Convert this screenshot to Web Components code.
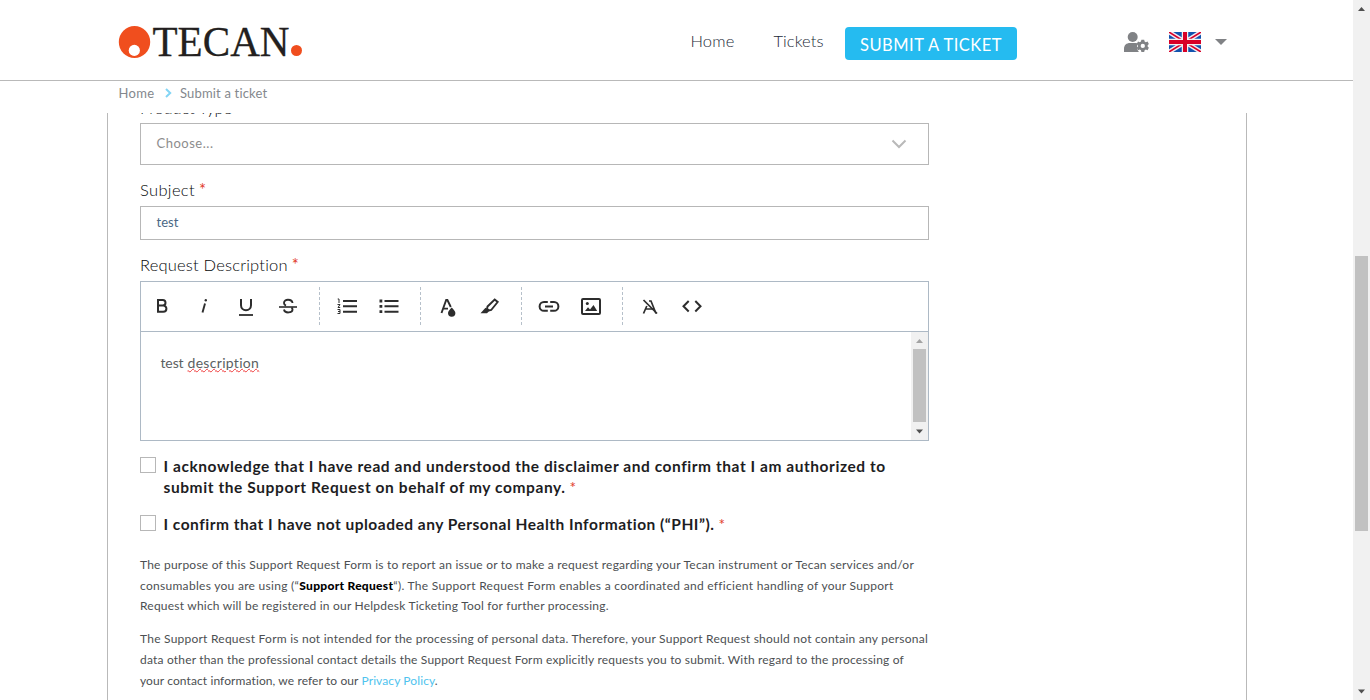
<!DOCTYPE html>
<html lang="en"><head><meta charset="utf-8"><title>Submit a ticket</title>
<style>
html,body{margin:0;height:100%;overflow:hidden;background:#fff}
body{font-family:Lato,"Open Sans",sans-serif;color:#4b5056}
</style></head><body>
<support-page></support-page>
<script>
const define=(name,html,setup)=>customElements.define(name,class extends HTMLElement{
  connectedCallback(){
    if(this.shadowRoot)return;
    this.attachShadow({mode:'open'}).innerHTML=html;
    if(setup)setup(this,this.shadowRoot);
  }
});

define('support-page',`<style>
:host{display:flex;width:100%;height:700px;overflow:hidden}
main{flex:1;min-width:0;display:flex;flex-direction:column}
.clip{flex:1;min-height:0;overflow:hidden;padding-left:107px}
scroll-bar{height:700px}
</style><main><site-header></site-header><bread-crumbs></bread-crumbs><div class="clip"><ticket-form></ticket-form></div></main>
<scroll-bar style="--before:239px;--thumb:275px;--up:#505050"></scroll-bar>`);

define('site-header',`<style>
:host{display:flex;box-sizing:border-box;height:81px;border-bottom:1px solid #b9b9b9;padding-left:119px;flex:none}
.logo{margin-top:24px;width:185px;height:38px;display:block}
nav{display:flex;margin-left:386.500px;color:#1c2a38;font-weight:300;font-size:16.500px;line-height:20px}
nav>span{margin-top:31px}
.t{margin-left:39px}
.btn{box-sizing:border-box;margin:27px 0 0 21px;width:172px;height:33px;border-radius:4px;background:#25bbf0;color:#fff;padding-left:15.500px;line-height:36px;font-size:16.500px;font-weight:400}
.user{margin:30px 0 0 106px;width:28px;height:24px}
.flag{margin:32px 0 0 18px;width:32px;height:20px}
.caret{margin:39px 0 0 14px;width:12px;height:6px}
svg{flex:none;display:block;overflow:visible}
.flag{overflow:hidden}
</style>
<svg class="logo" viewBox="119 24 185 38"><ellipse cx="134.500" cy="42" rx="15.700" ry="16" fill="#f04e1e"/><circle cx="134.300" cy="50.400" r="5.600" fill="#fff"/><text x="152.500" y="56" font-family="Liberation Serif,serif" font-size="42.500" textLength="137" lengthAdjust="spacingAndGlyphs" fill="#231f20" stroke="#231f20" stroke-width=".3">TECAN</text><circle cx="296.500" cy="50.500" r="5.500" fill="#f04e1e"/></svg>
<nav><span><fit-text w="44">Home</fit-text></span><span class="t"><fit-text w="50">Tickets</fit-text></span><div class="btn"><fit-text w="142">SUBMIT A TICKET</fit-text></div></nav>
<svg class="user" viewBox="0 0 28 24" fill="#808285"><circle cx="9.700" cy="7" r="5"/><path d="M1 22v-3c0-4 2.500-6 6-6h5c1.500 0 2.500.4 3 .9-1.500 1.800-1.300 5.500 1 8.100z"/><path d="M18.700 10.300h3l.5 1.900 1.300.7 1.900-.6 1.400 2.500-1.300 1.400v1.500l1.300 1.400-1.400 2.500-1.900-.6-1.300.8-.5 1.900h-3l-.5-1.900-1.300-.8-1.900.6-1.400-2.500 1.400-1.400v-1.500l-1.400-1.400 1.400-2.500 1.900.6 1.300-.7zM20.200 14.600a2.300 2.300 0 1 0 0 4.700 2.300 2.300 0 0 0 0-4.700z" fill-rule="evenodd" transform="translate(1.200 .3) scale(.92)"/></svg>
<svg class="flag" viewBox="0 0 32 20"><path fill="#1253ae" d="M0 0h32v20H0z"/><path d="M0 0l32 20M32 0L0 20" stroke="#f2e9ef" stroke-width="4.500"/><path d="M0 0l16 10M32 0L16 10M16 10L0 20M16 10l16 10" stroke="#d80027" stroke-width="1.500"/><path d="M16 0v20M0 10h32" stroke="#f2f0f2" stroke-width="6.500"/><path d="M16 0v20M0 10h32" stroke="#d80027" stroke-width="4"/></svg>
<svg class="caret" viewBox="0 0 12 6"><path fill="#808285" d="M0 0h12L6 6z"/></svg>`);

define('bread-crumbs',`<style>
:host{display:flex;height:32px;flex:none;padding-left:118.500px;font-size:13px;line-height:24px;color:#84888d}
svg{margin:7px 7.500px 0 9px;width:9px;height:10px}
</style><fit-text w="36">Home</fit-text><svg viewBox="0 0 9 10" fill="none" stroke="#83d5f5" stroke-width="2"><path d="M2 1l4.200 4L2 9"/></svg><fit-text w="87.500">Submit a ticket</fit-text>`);

define('field-label',`<style>
:host{display:flex;height:20px;line-height:20px;font-size:16.500px;font-weight:300;color:#050709}
i{font-style:normal;font-weight:400;color:#e2412e;margin-left:4px}
</style><slot></slot><i>*</i>`);

define('check-row',`<style>
:host{display:flex;font-size:15.500px;font-weight:700;line-height:21px;color:#1d1d1f}
.b{flex:none;box-sizing:border-box;width:16px;height:16px;border:1px solid #b7b7b7;margin:1px 7.500px 0 0}
</style><div class="b"></div><div><slot></slot></div>`);

define('ticket-form',`<style>
:host{display:block;box-sizing:border-box;width:1140px;height:700px;border:solid #b9b9b9;border-width:0 1px;padding-left:32px}
.col{width:789px;display:flow-root}
.type{margin-top:-15px;height:25px}
.box{box-sizing:border-box;border:1px solid #b7b7b7;padding-left:15.500px;font-size:13px;display:flex}
.select{height:42px;line-height:39px;color:#8d8d8d}
.select svg{margin:15px 0 0 auto;width:16px;height:10px;margin-right:21px}
.input{height:34px;line-height:31px;color:#4a6785}
.subject{margin:15px 0 6px}.desc{margin:15px 0 6px}
.a{margin-top:15px}.c{margin-top:16px}
em{font-style:normal;font-weight:400;color:#e2412e;margin-left:4px}
.p{font-size:12px;line-height:20.700px;color:#4c4f52}
.p div{height:20.700px}
.p1{margin-top:20px}.p2{margin-top:12.300px}
b{color:#000;font-weight:900}a{color:#4fc3ee}
</style><div class="col">
<field-label class="type"><fit-text w="92">Product Type</fit-text></field-label>
<div class="box select"><fit-text w="57">Choose...</fit-text><svg viewBox="0 0 16 10" fill="none" stroke="#b9b9b9" stroke-width="2"><path d="M1.500 1.500L8 8l6.500-6.500"/></svg></div>
<field-label class="subject"><fit-text w="55">Subject</fit-text></field-label>
<div class="box input"><fit-text w="22">test</fit-text></div>
<field-label class="desc"><fit-text w="148">Request Description</fit-text></field-label>
<rich-editor></rich-editor>
<check-row class="a"><fit-text w="722">I acknowledge that I have read and understood the disclaimer and confirm that I am authorized to</fit-text><br><fit-text w="402">submit the Support Request on behalf of my company.</fit-text><em>*</em></check-row>
<check-row class="c"><fit-text w="551">I confirm that I have not uploaded any Personal Health Information (“PHI”).</fit-text><em>*</em></check-row>
<div class="p p1"><div><fit-text w="774">The purpose of this Support Request Form is to report an issue or to make a request regarding your Tecan instrument or Tecan services and/or</fit-text></div><div><fit-text w="753">consumables you are using (“<b>Support Request</b>“). The Support Request Form enables a coordinated and efficient handling of your Support</fit-text></div><div><fit-text w="469">Request which will be registered in our Helpdesk Ticketing Tool for further processing.</fit-text></div></div>
<div class="p p2"><div><fit-text w="788">The Support Request Form is not intended for the processing of personal data. Therefore, your Support Request should not contain any personal</fit-text></div><div><fit-text w="764">data other than the professional contact details the Support Request Form explicitly requests you to submit. With regard to the processing of</fit-text></div><div><fit-text w="298">your contact information, we refer to our <a>Privacy Policy</a>.</fit-text></div></div>
</div>`);

define('tool-icon',`<style>:host{display:block;width:22px;height:22px;flex:none;margin-right:20px;color:#2d2d2d}svg{display:block;overflow:visible}</style><svg width="22" height="22" viewBox="0 0 22 22" fill="none" stroke="currentColor" stroke-width="2"></svg>`,(h,r)=>{
 const I={
 bold:'<path d="M7 5h4.700a2.700 2.700 0 0 1 0 5.600H7zM7 10.600h5.300a3 3 0 0 1 0 6.200H7z"/>',
 italic:'<path d="M12 8.500L9.500 17.500" stroke-width="1.900"/><circle cx="12.800" cy="5.200" r="1.200" fill="currentColor" stroke="none"/>',
 under:'<path d="M6 4v6.300a5 5 0 0 0 10 0V4"/><path d="M4 20h14" stroke-width="1.800"/>',
 strike:'<path d="M15.500 8C15 4 7 3.500 7 8c0 1.200.6 2 2 2.600M7 14.500c.7 4 8.500 3.800 8.500 0 0-.8-.3-1.400-1-2" stroke-width="1.900"/><path d="M2 12h18" stroke-width="1.600"/>',
 ol:'<path d="M7 6h14M7 11.300h14M7 16.700h14"/><path d="M1.700 4h1.300v4M1.500 9.500h2.500l-2 3h2.200M1.500 14.500h2.500v4H1.500M2 16.500h2" stroke-width="1"/>',
 ul:'<path d="M6.500 6h14M6.500 11.300h14M6.500 16.700h14"/><path d="M1.500 6h2.800M1.500 11.300h2.800M1.500 16.700h2.800" stroke-width="2.800"/>',
 color:'<path d="M4.500 18L9.200 5h1.200l3.400 7M6.500 13.600h4.500" stroke-width="1.900"/><path d="M14.700 12.500c2 2.100 3.700 3.800 3.700 5.500a3.700 3.700 0 0 1-7.400 0c0-1.700 1.700-3.400 3.700-5.500z" fill="currentColor" stroke="none"/>',
 marker:'<path d="M8.500 11.500L15.700 4.500l3 2.500-6.500 8-2.200.5-2-1.700z" stroke-width="1.900"/><path d="M1.500 18.200l5-5.500 3.700 3.300-2.200 2.200z" fill="currentColor" stroke="none"/>',
 link:'<path d="M9.800 7H6a4.400 4.400 0 0 0 0 8.800h3.800M12.200 7H16a4.400 4.400 0 0 1 0 8.800h-3.800M7 11.400h8"/>',
 image:'<rect x="2" y="4" width="18" height="15" rx="1"/><path d="M5 16l3-3.700 2 2.200 3.500-4.500 3.700 6z" fill="currentColor" stroke="none"/><circle cx="7.300" cy="8.500" r="1.500" fill="currentColor" stroke="none"/>',
 clear:'<path d="M4.500 18.500L7.800 11M10 6h2l5 12.500M7 14h7.500" stroke-width="1.700"/><path d="M4.500 5l13.500 13.500" stroke-width="1.700"/>',
 code:'<path d="M7.700 6L2.500 11.300l5.200 5.200M14.300 6l5.200 5.300-5.200 5.200"/>'};
 r.querySelector('svg').innerHTML=I[h.getAttribute('name')];
});

define('rich-editor',`<style>
:host{display:block;box-sizing:border-box;height:160px;border:1px solid #adb9c5}
.bar{display:flex;box-sizing:border-box;height:50px;border-bottom:1px solid #adb9c5;padding:13px 0 0 10px}
.s{width:0;height:38px;border-left:1px dashed #b6c0ca;margin:-8px 16px 0 0}
.body{display:flex;height:108px}
.txt{flex:1;padding:21px 0 0 19.500px;font-size:14px;line-height:20px;color:#5c5f62}
.w{text-decoration:underline wavy #ef3b3b 1px;text-underline-offset:0px}
.u{margin-left:4px}
</style><div class="bar"><tool-icon name="bold"></tool-icon><tool-icon name="italic"></tool-icon><tool-icon name="under"></tool-icon><tool-icon name="strike"></tool-icon><div class="s"></div><tool-icon name="ol"></tool-icon><tool-icon name="ul"></tool-icon><div class="s"></div><tool-icon name="color"></tool-icon><tool-icon name="marker"></tool-icon><div class="s"></div><tool-icon name="link"></tool-icon><tool-icon name="image"></tool-icon><div class="s"></div><tool-icon name="clear"></tool-icon><tool-icon name="code"></tool-icon></div>
<div class="body"><div class="txt"><fit-text w="23">test</fit-text><fit-text class="u" w="72"><span class="w">description</span></fit-text></div><scroll-bar style="--before:0px;--thumb:73px;--up:#a3a3a3"></scroll-bar></div>`);

define('scroll-bar',`<style>
:host{display:flex;flex-direction:column;width:17px;flex:none;background:#f1f1f1}
svg{width:17px;height:17px;flex:none}
.thumb{margin:var(--before) 2px 0;height:var(--thumb);background:#c1c1c1}
.dn{margin-top:auto}
</style><svg viewBox="0 0 17 17"><path d="M5 11l3.500-4 3.500 4z" style="fill:var(--up)"/></svg><div class="thumb"></div><svg class="dn" viewBox="0 0 17 17"><path d="M5 6.500l3.500 4 3.500-4z" fill="#505050"/></svg>`);

// Spreads a single line of text over the width given in its w attribute.
define('fit-text',`<style>:host{display:inline-block;white-space:nowrap}</style><slot></slot>`,h=>{
  const w=+h.getAttribute('w'),n=h.textContent.length;
  h.style.letterSpacing=(w-h.getBoundingClientRect().width)/n+'px';
});
</script></body></html>
